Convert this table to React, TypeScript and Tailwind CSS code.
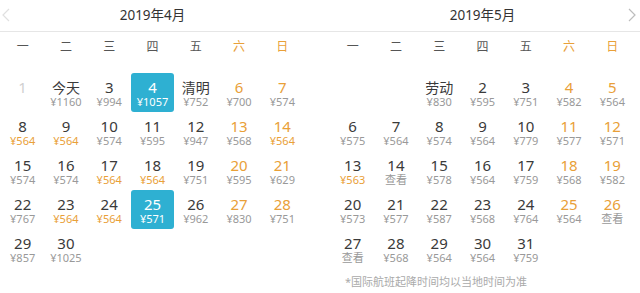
import React from "react";

type Day = { d: number; label?: string; price?: number | null; past?: boolean; selected?: boolean };

const WEEK = ["一", "二", "三", "四", "五", "六", "日"];

const april: Day[] = [
  { d: 1, past: true },
  { d: 2, label: "今天", price: 1160 },
  { d: 3, price: 994 },
  { d: 4, price: 1057, selected: true },
  { d: 5, label: "清明", price: 752 },
  { d: 6, price: 700 },
  { d: 7, price: 574 },
  { d: 8, price: 564 },
  { d: 9, price: 564 },
  { d: 10, price: 574 },
  { d: 11, price: 595 },
  { d: 12, price: 947 },
  { d: 13, price: 568 },
  { d: 14, price: 564 },
  { d: 15, price: 574 },
  { d: 16, price: 574 },
  { d: 17, price: 564 },
  { d: 18, price: 564 },
  { d: 19, price: 751 },
  { d: 20, price: 595 },
  { d: 21, price: 629 },
  { d: 22, price: 767 },
  { d: 23, price: 564 },
  { d: 24, price: 564 },
  { d: 25, price: 571, selected: true },
  { d: 26, price: 962 },
  { d: 27, price: 830 },
  { d: 28, price: 751 },
  { d: 29, price: 857 },
  { d: 30, price: 1025 },
];

const mayPrices: (number | null)[] = [
  830, 595, 751, 582, 564, 575, 564, 574, 564, 779, 577, 571, 563, null, 578, 564, 759, 568, 582, 573,
  577, 587, 568, 764, 564, null, null, 568, 564, 564, 759,
];
const may: Day[] = mayPrices.map((p, i) => ({ d: i + 1, price: p, label: i === 0 ? "劳动" : undefined }));

function Cell({ day, col, cheapest }: { day: Day; col: number; cheapest: number }) {
  const weekend = col >= 5;
  let numColor = weekend ? "text-[#e9a038]" : "text-[#3a3a3a]";
  if (day.past) numColor = "text-[#d0d0d0]";
  if (day.selected) numColor = "text-white";
  let priceColor = day.price === cheapest ? "text-[#e9a038]" : "text-[#999]";
  if (day.selected) priceColor = "text-white";

  return (
    <div
      className={`h-[39px] flex flex-col items-center pt-[7px] rounded-[3px] ${day.selected ? "bg-[#2eb0d2]" : ""}`}
    >
      <div className={`leading-[15px] ${day.label ? "text-[14px]" : "text-[15px]"} ${numColor}`}>
        {day.label ?? day.d}
      </div>
      {!day.past && (
        <div className={`mt-[1px] leading-[12px] text-[11px] ${priceColor}`}>
          {day.price == null ? "查看" : `¥${day.price}`}
        </div>
      )}
    </div>
  );
}

function Month({
  title,
  days,
  offset,
  cheapest,
  ml,
  side,
  footer,
}: {
  title: string;
  days: Day[];
  offset: number;
  cheapest: number;
  ml: string;
  side: "left" | "right";
  footer?: string;
}) {
  return (
    <div className="w-[320px] relative">
      <div className="h-[32px] border-b border-[#e6e6e6]">
        <div className={`${ml} w-[303px] h-full flex items-center justify-center text-[13.5px] text-[#333]`}>
          {title}
        </div>
      </div>
      {side === "left" ? (
        <svg className="absolute left-[2px] top-[8px]" width="8" height="14" viewBox="0 0 8 14">
          <polyline points="7,1 1,7 7,13" fill="none" stroke="#e0e0e0" strokeWidth="1.2" />
        </svg>
      ) : (
        <svg className="absolute right-[4px] top-[8px]" width="8" height="14" viewBox="0 0 8 14">
          <polyline points="1,1 7,7 1,13" fill="none" stroke="#bdbdbd" strokeWidth="1.2" />
        </svg>
      )}
      <div className={`${ml} w-[303px] grid grid-cols-7 h-[28px] items-center mt-[1px]`}>
        {WEEK.map((w, i) => (
          <div
            key={w}
            className={`text-center text-[12px] ${i >= 5 ? "text-[#e9a038]" : "text-[#555]"}`}
          >
            {w}
          </div>
        ))}
      </div>
      <div className={`${ml} w-[303px] grid grid-cols-7 mt-[12px]`}>
        {Array.from({ length: offset }).map((_, i) => (
          <div key={`e${i}`} />
        ))}
        {days.map((day, i) => (
          <Cell key={day.d} day={day} col={(i + offset) % 7} cheapest={cheapest} />
        ))}
      </div>
      {footer && (
        <div className={`${ml} pl-[14px] mt-[7px] text-[11px] leading-[14px] text-[#aaa]`}>{footer}</div>
      )}
    </div>
  );
}

export default function App() {
  return (
    <div
      className="w-[640px] h-[293px] bg-white flex overflow-hidden"
      style={{ fontFamily: '"Noto Sans", "Noto Sans CJK SC", sans-serif' }}
    >
      <Month title="2019年4月" days={april} offset={0} cheapest={564} ml="ml-[1px]" side="left" />
      <Month
        title="2019年5月"
        days={may}
        offset={2}
        cheapest={563}
        ml="ml-[11px]"
        side="right"
        footer="*国际航班起降时间均以当地时间为准"
      />
    </div>
  );
}
